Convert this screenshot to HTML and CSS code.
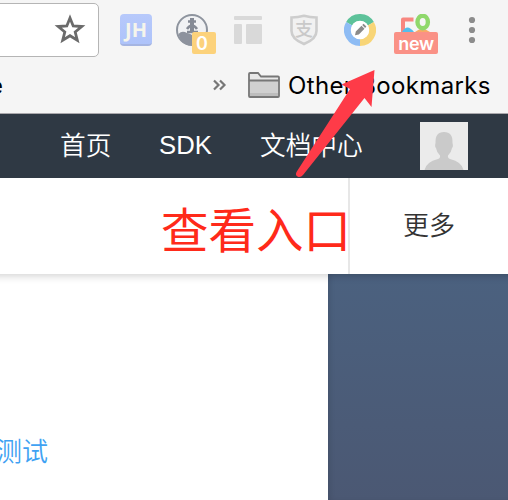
FILE: index.html
```html
<!DOCTYPE html>
<html lang="zh-CN">
<head>
<meta charset="utf-8">
<title>文档中心</title>
<link rel="stylesheet" href="styles.css">
</head>
<body>
<div class="window">
  <header class="chrome">
    <div class="toolbar">
      <div class="address">
        <svg width="34" height="34" viewBox="0 0 34 34"><path d="M17 5 L20.2 13 L28.8 13.500 L22.200 19 L24.3 27.2 L17 22.7 L9.700 27.2 L11.800 19 L5.200 13.500 L13.800 13 Z" fill="none" stroke="#6b6b6b" stroke-width="2.8"/></svg>
      </div>
      <div class="extensions">
        <div class="ext jh">JH</div>
        <div class="ext">
          <svg width="32" height="32" viewBox="0 0 32 32"><circle cx="16" cy="16" r="15" fill="#f1f2f4" stroke="#8e949e" stroke-width="2"/><path d="M2.5 20 Q6 16 11 19 Q15 19 20 25 L23 30 Q12 34 5 27Z" fill="#8d929d"/><path d="M16 4v14" stroke="#858a95" stroke-width="4" fill="none"/><path d="M12 7.500h8M11 15q5-7 10 0M11 18h11" fill="none" stroke="#858a95" stroke-width="2.600"/></svg>
          <span class="badge count">0</span>
        </div>
        <div class="ext">
          <svg width="32" height="32" viewBox="0 0 32 32" fill="#d9d9d9"><rect x="2" y="2" width="28" height="4" rx="1"/><rect x="2" y="10" width="8" height="20" rx="1"/><rect x="14" y="10" width="16" height="20" rx="1"/></svg>
        </div>
        <div class="ext shield">
          <svg width="32" height="32" viewBox="0 0 32 32"><path d="M16 1.8 Q22 3.5 28.5 3.5 V17 Q28.5 25 16 30 Q3.5 25 3.5 17 V3.5 Q10 3.5 16 1.8Z" fill="#f1f1f1" stroke="#cdcdcd" stroke-width="2.6"/></svg>
          <span class="pay">支</span>
        </div>
        <div class="ext">
          <svg width="32" height="32" viewBox="0 0 32 32"><g fill="none" stroke-width="7"><path d="M5.2 9.7 A12.5 12.5 0 0 1 26.8 9.7" stroke="#5dc29a"/><path d="M26.8 9.7 A12.5 12.5 0 0 1 16 28.5" stroke="#f8d577"/><path d="M16 28.5 A12.5 12.5 0 0 1 5.2 9.7" stroke="#8ebcf4"/></g><circle cx="16" cy="16" r="9.2" fill="#fff"/><path d="M11 21.2 L11.8 17.5 L17.5 11.8 L20.5 14.8 L14.8 20.5Z M18.2 11.1 L19.6 9.8 L22.4 12.6 L21.1 14Z" fill="#8a8a8a"/></svg>
        </div>
        <div class="ext">
          <svg width="32" height="32" viewBox="0 0 32 32"><path d="M13.500 5.500H3V18" fill="none" stroke="#f88780" stroke-width="4" stroke-linejoin="round"/><path d="M2 18 Q7 9 14 18Z" fill="#55bdea"/><path d="M15 18 Q22 12 30 18Z" fill="#f8aa65"/><ellipse cx="22.7" cy="8" rx="5.200" ry="6.200" fill="none" stroke="#8fd86b" stroke-width="4.400"/></svg>
          <span class="badge new">new</span>
        </div>
        <div class="ext">
          <svg width="32" height="32" viewBox="0 0 32 32" fill="#8c8c8c"><circle cx="16" cy="6" r="3.1"/><circle cx="16" cy="16" r="3.1"/><circle cx="16" cy="26" r="3.1"/></svg>
        </div>
      </div>
    </div>
    <div class="bookmarks">
      <span class="cut">e</span>
      <svg class="more-marks" width="14" height="14" viewBox="0 0 14 14"><path d="M1 1.5 L5.5 6 L1 10.5 M7 1.5 L11.5 6 L7 10.5" fill="none" stroke="#777" stroke-width="2.2"/></svg>
      <svg class="folder" width="32" height="26" viewBox="0 0 32 26"><path d="M1 24 V2 Q1 1 2 1 H10 L13 4.5 H30 Q31 4.5 31 5.5 V24 Q31 25 30 25 H2 Q1 25 1 24Z" fill="#e9e9e9"/><path d="M2 9H30V21H2Z" fill="#d0d0d0"/><path d="M2 21H30V24H2Z" fill="#bdbdbd"/><path d="M1 24 V2 Q1 1 2 1 H10 L13 4.5 H30 Q31 4.5 31 5.5 V24 Q31 25 30 25 H2 Q1 25 1 24Z M1 8.5H31" fill="none" stroke="#777" stroke-width="1.8"/></svg>
      <span class="other">Other Bookmarks</span>
    </div>
  </header>
  <nav class="nav">
    <a class="home">首页</a><a class="sdk">SDK</a><a class="docs">文档中心</a>
    <svg class="avatar" width="48" height="48" viewBox="0 0 48 48"><path fill="#ebebeb" d="M0 0h48v48H0z"/><path d="M4.500 48 Q6 40 18 37 Q20.500 36 20 33.500 Q16.500 30 16 26 Q14.500 25 15.500 21 Q15 10 24 10 Q33 10 32.500 21 Q33.500 25 32 26 Q31.500 30 28 33.500 Q27.500 36 30 37 Q42 40 43.500 48Z" fill="#cacaca"/></svg>
  </nav>
  <div class="subnav">
    <div class="entry">查看入口</div>
    <div class="more">更多</div>
  </div>
  <main class="content">
    <div class="page"><a class="test">测试</a></div>
    <aside class="side"></aside>
  </main>
  <svg class="arrow" width="90" height="116" viewBox="290 66 90 116"><path d="M374.500 70 L341.500 84.500 L350 89 L296.500 172 Q295 175 297.500 176.500 Q300.500 178 303 175 L364.500 98 L371.500 107Z" fill="#fe3b48"/></svg>
</div>
</body>
</html>
```
FILE: styles.css
```css
* { box-sizing: border-box; }
body { margin: 0; font-family: "Liberation Sans", "Noto Sans CJK SC", sans-serif; }
.window { position: relative; width: 508px; height: 500px; overflow: hidden; background: #fff; }
.chrome { height: 114px; background: #f5f5f5; border-bottom: 1px solid #aaa8ac; }
.toolbar { display: flex; height: 60px; }
.address { display: flex; align-items: center; justify-content: flex-end; width: 109px; height: 54px; margin: 3px 0 0 -10px; padding-right: 11px; background: #fff; border: 1px solid #b5b5b5; border-radius: 5px; }
.extensions { display: flex; gap: 24px; margin: 14px 0 0 21px; }
.ext { position: relative; width: 32px; height: 32px; flex: none; }
.ext svg { display: block; }
.jh { border-radius: 4px; background: linear-gradient(#b7c9fb, #aec3fa); border-bottom: 2px solid #a5b5e2; color: #f5f5ec; font: 700 20px/31px "Noto Sans", sans-serif; text-align: center; }
.badge { position: absolute; top: 18px; height: 22px; border-radius: 2px; color: #fff; text-align: center; font-family: Inter, sans-serif; }
.count { left: 16px; width: 24px; background: #fcd27b; font-size: 18px; font-weight: 600; line-height: 23px; padding-right: 4px; }
.new { left: -6px; width: 44px; background: #fa9186; font-size: 18px; font-weight: 600; line-height: 23px; letter-spacing: -.4px; }
.pay { position: absolute; left: 7px; top: 4px; color: #c9c9c9; font: 500 18px/20px "Noto Sans CJK SC", sans-serif; }
.bookmarks { display: flex; align-items: center; height: 53px; font: 24px/30px Inter, sans-serif; color: #000; }
.cut { width: 14px; margin: -2px 0 0 -11px; }
.more-marks { margin-left: 210px; margin-top: -1px; }
.folder { margin-left: 21px; margin-top: -4px; }
.other { margin-left: 8px; margin-top: -2px; white-space: nowrap; letter-spacing: .35px; }
.nav { display: flex; height: 64px; background: #2f3944; color: #fff; font-size: 25.7px; font-weight: 350; line-height: 64px; white-space: nowrap; }
.home { width: 99px; margin-left: 60px; }
.sdk { width: 101px; line-height: 63px; }
.docs { width: 160px; }
.avatar { margin-top: 8px; }
.subnav { position: relative; display: flex; height: 96px; margin: 0 -10px; padding: 0 10px; background: #fff; box-shadow: 0 2px 8px rgba(0,0,0,.18); clip-path: inset(0 0 -12px 0); }
.entry { width: 350px; padding-left: 161px; border-right: 2px solid #e7e7e7; color: #ff2a1a; font-size: 47.500px; font-weight: 400; line-height: 107px; white-space: nowrap; }
.more { padding-left: 53px; color: #333; font-size: 26px; font-weight: 350; line-height: 97px; }
.content { display: flex; height: 226px; }
.page { width: 328px; padding-top: 158px; }
.test { display: block; margin-left: -4px; color: #3fa2f3; font-size: 26px; font-weight: 350; line-height: 40px; }
.side { flex: 1; background: linear-gradient(#4b617f, #4b5873); box-shadow: inset 4px 0 6px -3px rgba(0,0,0,.14); }
.arrow { position: absolute; left: 290px; top: 66px; }
```
